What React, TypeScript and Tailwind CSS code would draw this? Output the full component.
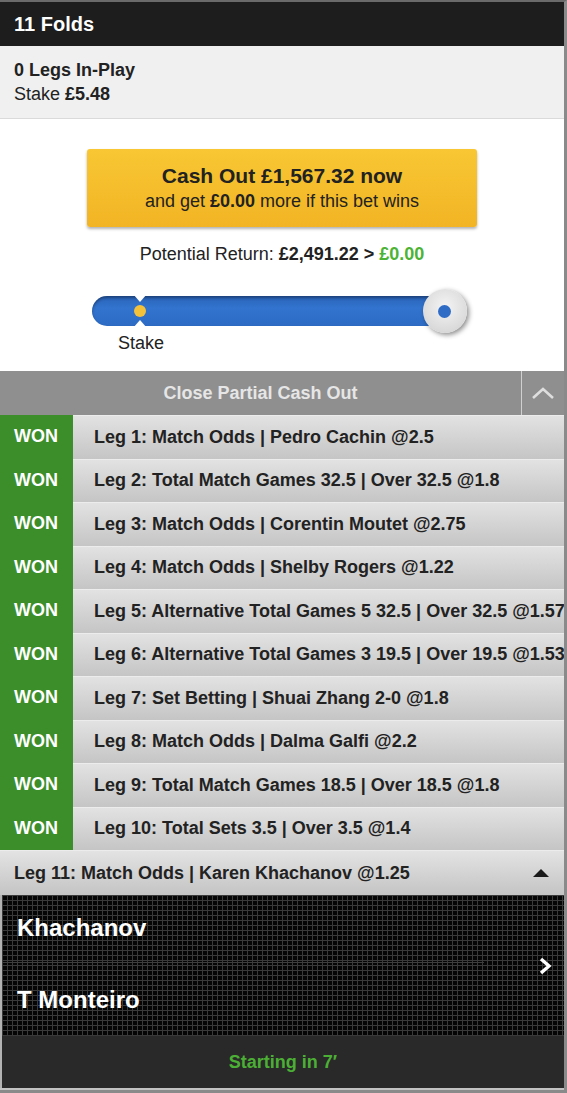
import React from "react";

const legs = [
  "Leg 1: Match Odds | Pedro Cachin @2.5",
  "Leg 2: Total Match Games 32.5 | Over 32.5 @1.8",
  "Leg 3: Match Odds | Corentin Moutet @2.75",
  "Leg 4: Match Odds | Shelby Rogers @1.22",
  "Leg 5: Alternative Total Games 5 32.5 | Over 32.5 @1.57",
  "Leg 6: Alternative Total Games 3 19.5 | Over 19.5 @1.53",
  "Leg 7: Set Betting | Shuai Zhang 2-0 @1.8",
  "Leg 8: Match Odds | Dalma Galfi @2.2",
  "Leg 9: Total Match Games 18.5 | Over 18.5 @1.8",
  "Leg 10: Total Sets 3.5 | Over 3.5 @1.4",
];

function ChevronUp() {
  return (
    <svg width="24" height="14" viewBox="0 0 24 14" fill="none">
      <path d="M2 12 L12 3 L22 12" stroke="#dedede" strokeWidth="2.6" />
    </svg>
  );
}

function ChevronRight() {
  return (
    <svg width="14" height="18" viewBox="0 0 14 18" fill="none">
      <path d="M3 2 L11 9 L3 16" stroke="#ffffff" strokeWidth="3.4" strokeLinejoin="miter" />
    </svg>
  );
}

function Slider() {
  return (
    <div className="relative h-[50px] w-[380px]">
      {/* track */}
      <div className="absolute left-0 top-[10px] h-[30px] w-[370px] rounded-full bg-[linear-gradient(to_bottom,#2a63b8,#3274cf_40%,#2d6bc4)] shadow-[inset_0_2px_3px_rgba(0,0,0,0.35)]" />
      {/* stake notch */}
      <div className="absolute left-[41px] top-[8px] h-0 w-0 border-x-[7px] border-t-[8px] border-x-transparent border-t-white" />
      <div className="absolute left-[41px] top-[34px] h-0 w-0 border-x-[7px] border-b-[8px] border-x-transparent border-b-white" />
      <div className="absolute left-[42px] top-[19px] h-[12px] w-[12px] rounded-full bg-[#f4c13a]" />
      {/* handle */}
      <div className="absolute left-[331px] top-[3px] flex h-[44px] w-[44px] items-center justify-center rounded-full bg-[radial-gradient(circle_at_50%_40%,#f4f4f4,#dadada_70%,#c4c4c4)] shadow-[2px_2px_5px_rgba(0,0,0,0.45)]">
        <div className="h-[13px] w-[13px] rounded-full bg-[#2f6cc6]" />
      </div>
    </div>
  );
}

export default function App() {
  return (
    <div className="w-[567px] border-r-[3px] border-t-[2px] border-r-[#8a8a8a] border-t-[#6a6a6a] font-['Liberation_Sans',Arial,sans-serif] text-[#222]">
      {/* title */}
      <div className="flex h-[44px] items-center bg-[#1d1d1d] px-[14px] text-[20px] font-bold text-white">
        11 Folds
      </div>

      {/* summary */}
      <div className="border-b border-[#dadada] bg-[#f0f0f0] px-[14px] pb-[12px] pt-[12px] text-[18px] leading-[24px]">
        <div className="font-bold">0 Legs In-Play</div>
        <div>
          Stake <span className="font-bold">£5.48</span>
        </div>
      </div>

      {/* cash out */}
      <div className="flex flex-col items-center bg-white pb-[16px] pt-[30px]">
        <div className="flex h-[78px] w-[390px] flex-col items-center justify-center rounded-[3px] bg-[linear-gradient(to_bottom,#f8c733,#f2b424)] shadow-[0_2px_3px_rgba(0,0,0,0.3)]">
          <div className="text-[21px] font-bold leading-[26px] text-[#222]">Cash Out £1,567.32 now</div>
          <div className="text-[18px] leading-[24px] text-[#222]">
            and get <span className="font-bold">£0.00</span> more if this bet wins
          </div>
        </div>
        <div className="mt-[15px] text-[18px] leading-[24px]">
          Potential Return: <span className="font-bold">£2,491.22 &gt; </span>
          <span className="font-bold text-[#4cb335]">£0.00</span>
        </div>
        <div className="mt-[20px] pr-[1px]">
          <Slider />
        </div>
        <div className="-mt-[5px] w-[380px] pl-[26px] text-[18px] leading-[24px]">Stake</div>
      </div>

      {/* partial cash out bar */}
      <div className="flex h-[44px] bg-[#8f8f8f]">
        <div className="flex flex-1 items-center justify-center text-[18px] font-bold text-[#e6e6e6]">
          Close Partial Cash Out
        </div>
        <div className="flex w-[43px] items-center justify-center border-l border-[#d0d0d0]">
          <ChevronUp />
        </div>
      </div>

      {/* settled legs */}
      {legs.map((leg) => (
        <div key={leg} className="flex h-[43.5px]">
          <div className="flex w-[73px] items-center bg-[#3b8e2a] pl-[14px] text-[18px] font-bold text-white">
            WON
          </div>
          <div className="flex flex-1 items-center overflow-hidden whitespace-nowrap border-t border-[#ececec] bg-[linear-gradient(to_bottom,#e2e2e2,#c5c5c5)] pl-[21px] text-[18px] font-bold text-[#222]">
            {leg}
          </div>
        </div>
      ))}

      {/* open leg */}
      <div className="flex h-[45px] items-center justify-between border-t border-[#ececec] bg-[linear-gradient(to_bottom,#e3e3e3,#c4c4c4)] pl-[14px] pr-[15px] text-[18px] font-bold text-[#222]">
        <span>Leg 11: Match Odds | Karen Khachanov @1.25</span>
        <span className="h-0 w-0 border-x-[8px] border-b-[8px] border-x-transparent border-b-[#1a1a1a]" />
      </div>

      {/* scoreboard */}
      <div className="border-l-[2px] border-[#b3b3b3]">
        <div className="flex h-[141px] bg-[#050505] bg-[linear-gradient(to_right,#3a3a3a_1px,transparent_1px),linear-gradient(to_bottom,#3a3a3a_1px,transparent_1px)] bg-[size:5px_5px]">
          <div className="flex flex-1 flex-col">
            <div className="flex h-[67px] items-end pb-[16px] pl-[15px] text-[24px] font-bold text-white">
              Khachanov
            </div>
            <div className="mr-[40px] h-px bg-[#3e3e3e]" />
            <div className="flex flex-1 items-start pl-[15px] pt-[19px] text-[24px] font-bold text-white">
              T Monteiro
            </div>
          </div>
          <div className="flex w-[40px] items-center justify-center pl-[2px]">
            <ChevronRight />
          </div>
        </div>
        <div className="flex h-[52px] items-center justify-center bg-[#292929] text-[18px] font-bold text-[#4caf35]">
          Starting in 7′
        </div>
      </div>
      <div className="h-[2px] bg-[#c2c2c2]" />
      <div className="h-[3px] bg-[#8a8a8a]" />
    </div>
  );
}
